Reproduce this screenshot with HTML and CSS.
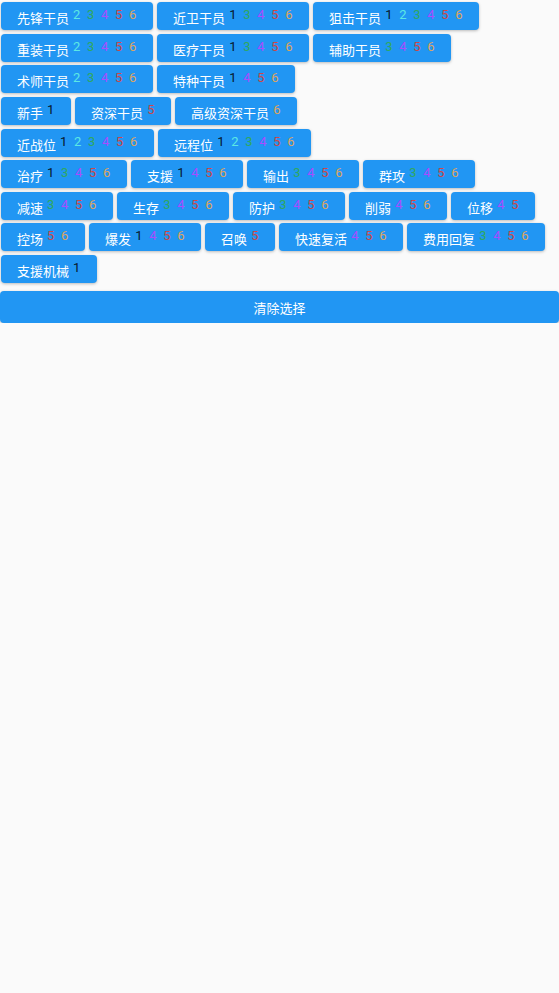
FILE: index.html
```html
<!DOCTYPE html>
<html lang="zh">
  <head>
    <meta charset="UTF-8" />
    <meta name="viewport" content="width=device-width, initial-scale=1.0" />
    <title>公开招募</title>
    <link rel="stylesheet" href="styles.css">
  </head>
  <body>
    <div class="filters">
      <!-- 职业 -->
      <div class="tag-group">
        <button class="tag">先锋干员<span class="r2">2</span><span class="r3">3</span><span class="r4">4</span><span class="r5">5</span><span class="r6">6</span></button>
        <button class="tag">近卫干员<span class="r1">1</span><span class="r3">3</span><span class="r4">4</span><span class="r5">5</span><span class="r6">6</span></button>
        <button class="tag">狙击干员<span class="r1">1</span><span class="r2">2</span><span class="r3">3</span><span class="r4">4</span><span class="r5">5</span><span class="r6">6</span></button>
        <button class="tag">重装干员<span class="r2">2</span><span class="r3">3</span><span class="r4">4</span><span class="r5">5</span><span class="r6">6</span></button>
        <button class="tag">医疗干员<span class="r1">1</span><span class="r3">3</span><span class="r4">4</span><span class="r5">5</span><span class="r6">6</span></button>
        <button class="tag">辅助干员<span class="r3">3</span><span class="r4">4</span><span class="r5">5</span><span class="r6">6</span></button>
        <button class="tag">术师干员<span class="r2">2</span><span class="r3">3</span><span class="r4">4</span><span class="r5">5</span><span class="r6">6</span></button>
        <button class="tag">特种干员<span class="r1">1</span><span class="r4">4</span><span class="r5">5</span><span class="r6">6</span></button>
      </div>

      <!-- 资质 -->
      <div class="tag-group">
        <button class="tag">新手<span class="r1">1</span></button>
        <button class="tag">资深干员<span class="r5">5</span></button>
        <button class="tag">高级资深干员<span class="r6">6</span></button>
      </div>

      <!-- 位置 -->
      <div class="tag-group">
        <button class="tag">近战位<span class="r1">1</span><span class="r2">2</span><span class="r3">3</span><span class="r4">4</span><span class="r5">5</span><span class="r6">6</span></button>
        <button class="tag">远程位<span class="r1">1</span><span class="r2">2</span><span class="r3">3</span><span class="r4">4</span><span class="r5">5</span><span class="r6">6</span></button>
      </div>

      <!-- 词缀 -->
      <div class="tag-group">
        <button class="tag">治疗<span class="r1">1</span><span class="r3">3</span><span class="r4">4</span><span class="r5">5</span><span class="r6">6</span></button>
        <button class="tag">支援<span class="r1">1</span><span class="r4">4</span><span class="r5">5</span><span class="r6">6</span></button>
        <button class="tag">输出<span class="r3">3</span><span class="r4">4</span><span class="r5">5</span><span class="r6">6</span></button>
        <button class="tag">群攻<span class="r3">3</span><span class="r4">4</span><span class="r5">5</span><span class="r6">6</span></button>
        <button class="tag">减速<span class="r3">3</span><span class="r4">4</span><span class="r5">5</span><span class="r6">6</span></button>
        <button class="tag">生存<span class="r3">3</span><span class="r4">4</span><span class="r5">5</span><span class="r6">6</span></button>
        <button class="tag">防护<span class="r3">3</span><span class="r4">4</span><span class="r5">5</span><span class="r6">6</span></button>
        <button class="tag">削弱<span class="r4">4</span><span class="r5">5</span><span class="r6">6</span></button>
        <button class="tag">位移<span class="r4">4</span><span class="r5">5</span></button>
        <button class="tag">控场<span class="r5">5</span><span class="r6">6</span></button>
        <button class="tag">爆发<span class="r1">1</span><span class="r4">4</span><span class="r5">5</span><span class="r6">6</span></button>
        <button class="tag">召唤<span class="r5">5</span></button>
        <button class="tag">快速复活<span class="r4">4</span><span class="r5">5</span><span class="r6">6</span></button>
        <button class="tag">费用回复<span class="r3">3</span><span class="r4">4</span><span class="r5">5</span><span class="r6">6</span></button>
        <button class="tag">支援机械<span class="r1">1</span></button>
      </div>
    </div>

    <button class="clear-btn">清除选择</button>
  </body>
</html>
```

FILE: styles.css
```css
body {
  font-family: Roboto, "Noto Sans CJK SC", sans-serif;
  background-color: #fafafa;
  margin: 0;
  padding: 2px 0 0 1px;
}

.filters {
  display: flex;
  flex-direction: column;
  gap: 3.625px;
}

.tag-group {
  display: flex;
  flex-wrap: wrap;
  column-gap: 4.5px;
  row-gap: 3.625px;
}

.tag {
  height: 28px;
  padding: 3px 16px 0 16px;
  display: flex;
  align-items: center;
  background-color: #2196f3;
  color: #fff;
  border: none;
  border-radius: 4px;
  box-shadow: 0 1px 3px rgba(0, 0, 0, 0.25);
  font-family: inherit;
  font-size: 13px;
  cursor: pointer;
}

.tag span {
  width: 7.5px;
  margin-left: 6.5px;
  position: relative;
  top: -3px;
  text-align: center;
}

.tag span:first-child {
  margin-left: 4px;
}

.r1 { color: #08172b; }
.r2 { color: #5ce8e4; }
.r3 { color: #30a860; }
.r4 { color: #a84cff; }
.r5 { color: #cc4848; }
.r6 { color: #dca460; }

.clear-btn {
  display: block;
  width: 559px;
  height: 32px;
  margin: 8px 0 0 -1px;
  background-color: #2196f3;
  color: #fff;
  border: none;
  border-radius: 4px;
  box-shadow: 0 1px 3px rgba(0, 0, 0, 0.25);
  font-family: inherit;
  font-size: 13px;
  cursor: pointer;
}
```
